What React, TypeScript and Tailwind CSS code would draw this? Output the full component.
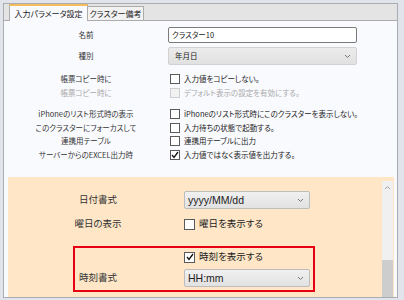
import React from 'react';

const jp = "font-['Noto_Sans_CJK_JP','Noto_Sans',sans-serif] [font-feature-settings:'palt']";

const Chevron: React.FC<{ up?: boolean; className?: string }> = ({ up, className }) => (
  <svg width="7" height="5" viewBox="0 0 7 5" className={className}>
    <polyline
      points={up ? '1,4 3.5,1.5 6,4' : '1,1 3.5,3.5 6,1'}
      fill="none"
      stroke="currentColor"
      strokeWidth="1"
    />
  </svg>
);

const Check: React.FC<{ checked?: boolean; disabled?: boolean; size?: string }> = ({
  checked,
  disabled,
  size = 'w-[10px] h-[10px]',
}) => (
  <span
    className={`${size} shrink-0 border flex items-center justify-center ${
      disabled ? 'border-[#cfcfcf] bg-[#f1f1f1]' : 'border-[#5a5a5a] bg-white'
    }`}
  >
    {checked && (
      <svg width="8" height="8" viewBox="0 0 8 8">
        <polyline points="1,4 3,6.5 7,1" fill="none" stroke="#111" strokeWidth="1.3" />
      </svg>
    )}
  </span>
);

const TopRow: React.FC<{ label: string; h: string; mt?: string; disabled?: boolean; children: React.ReactNode }> = ({
  label,
  h,
  mt = '',
  disabled,
  children,
}) => (
  <div className={`flex items-center ${h} ${mt}`}>
    <div className={`w-[164px] text-center ${disabled ? 'text-[#a9a9a9]' : 'text-[#333]'}`}>{label}</div>
    <div className="flex-1 flex items-center">{children}</div>
  </div>
);

const CheckText: React.FC<{ text: string; checked?: boolean; disabled?: boolean }> = ({ text, checked, disabled }) => (
  <div className="flex items-center pl-[2px] gap-[4px]">
    <Check checked={checked} disabled={disabled} />
    <span className={disabled ? 'text-[#a9a9a9]' : 'text-[#222]'}>{text}</span>
  </div>
);

const App: React.FC = () => {
  return (
    <div className={`w-[404px] h-[300px] bg-[#e1e5eb] pt-[3px] pl-[3px] pr-[6px] pb-[2px] overflow-hidden ${jp}`}>
      <div className="h-full border border-[#a9adb3] flex flex-col bg-[#f9fafe]">
        {/* tab strip */}
        <div className="h-[17px] shrink-0 bg-[#e4e4e4] border-b border-[#acacac] flex items-end pl-[5px] text-[8px] leading-none">
          <div className="h-[17px] -mb-px w-[79px] bg-[#f9fafe] border-x border-[#acacac] border-t-2 border-t-[#f4bd5a] flex items-center justify-center text-[#222]">
            入力パラメータ設定
          </div>
          <div className="h-[14px] w-[56px] bg-[#f2f2f2] border-r border-t border-[#acacac] flex items-center justify-center text-[#222]">
            クラスター備考
          </div>
        </div>

        {/* top settings */}
        <div className="pt-[6px] text-[7.5px] leading-none">
          <TopRow label="名前" h="h-[16px]">
            <div className="w-[189px] h-[16px] bg-white border border-[#7b7b7b] rounded-[2px] flex items-center pl-[3px] text-[#222]">
              クラスター10
            </div>
          </TopRow>
          <TopRow label="種別" h="h-[18px]" mt="mt-[4px]">
            <div className="w-[189px] h-[18px] bg-gradient-to-b from-[#ececec] to-[#e1e1e1] border border-[#d2d2d2] rounded-[2px] flex items-center justify-between pl-[6px] pr-[5px] text-[#222]">
              <span>年月日</span>
              <Chevron className="text-[#777]" />
            </div>
          </TopRow>
          <TopRow label="帳票コピー時に" h="h-[14px]" mt="mt-[7px]">
            <CheckText text="入力値をコピーしない。" />
          </TopRow>
          <TopRow label="帳票コピー時に" h="h-[14px]" disabled>
            <CheckText text="デフォルト表示の設定を有効にする。" disabled />
          </TopRow>
          <TopRow label="iPhoneのリスト形式時の表示" h="h-[14px]" mt="mt-[7px]">
            <CheckText text="iPhoneのリスト形式時にこのクラスターを表示しない。" />
          </TopRow>
          <TopRow label="このクラスターにフォーカスして" h="h-[13px]">
            <CheckText text="入力待ちの状態で起動する。" />
          </TopRow>
          <TopRow label="連携用テーブル" h="h-[14px]">
            <CheckText text="連携用テーブルに出力" />
          </TopRow>
          <TopRow label="サーバーからのEXCEL出力時" h="h-[14px]">
            <CheckText text="入力値ではなく表示値を出力する。" checked />
          </TopRow>
        </div>

        {/* orange date section */}
        <div className="mt-[15px] ml-[4px] mr-[3px] flex-1 bg-[#fee6c7] flex relative text-[9.5px] leading-none text-[#333]">
          <div className="flex-1 pt-[14px] pl-[4px]">
            <div className="flex items-center h-[18px]">
              <div className="w-[172px] text-center">日付書式</div>
              <div className="w-[126px] h-[18px] bg-gradient-to-b from-[#f0f0f0] to-[#e2e2e2] border border-[#bdbdbd] rounded-[2px] flex items-center justify-between pl-[3px] pr-[5px] font-['Liberation_Sans',sans-serif] text-[10.5px] text-[#222]">
                <span>yyyy/MM/dd</span>
                <Chevron className="text-[#777]" />
              </div>
            </div>
            <div className="flex items-center h-[14px] mt-[8px]">
              <div className="w-[172px] text-center">曜日の表示</div>
              <div className="flex items-center gap-[4px]">
                <Check size="w-[11px] h-[11px]" />
                <span className="text-[#222]">曜日を表示する</span>
              </div>
            </div>
            <div className="flex items-center h-[14px] mt-[19px]">
              <div className="w-[172px]" />
              <div className="flex items-center gap-[4px]">
                <Check size="w-[11px] h-[11px]" checked />
                <span className="text-[#222]">時刻を表示する</span>
              </div>
            </div>
            <div className="flex items-center h-[18px] mt-[5px]">
              <div className="w-[172px] text-center">時刻書式</div>
              <div className="w-[126px] h-[18px] bg-gradient-to-b from-[#f0f0f0] to-[#e2e2e2] border border-[#bdbdbd] rounded-[2px] flex items-center justify-between pl-[3px] pr-[5px] font-['Liberation_Sans',sans-serif] text-[10.5px] text-[#222]">
                <span>HH:mm</span>
                <Chevron className="text-[#777]" />
              </div>
            </div>
          </div>

          {/* scrollbar */}
          <div className="w-[11px] mt-[4px] mr-[1px] bg-[#f0f0f0] flex flex-col items-center">
            <Chevron up className="text-[#a0a0a0] mt-[4px]" />
            <div className="flex-1" />
            <div className="w-full h-[37px] bg-[#cdcdcd]" />
          </div>

          {/* highlight annotation */}
          <div className="absolute left-[65px] top-[69px] w-[242px] h-[46px] border-2 border-[#e60012] pointer-events-none" />
        </div>
      </div>
    </div>
  );
};

export default App;
